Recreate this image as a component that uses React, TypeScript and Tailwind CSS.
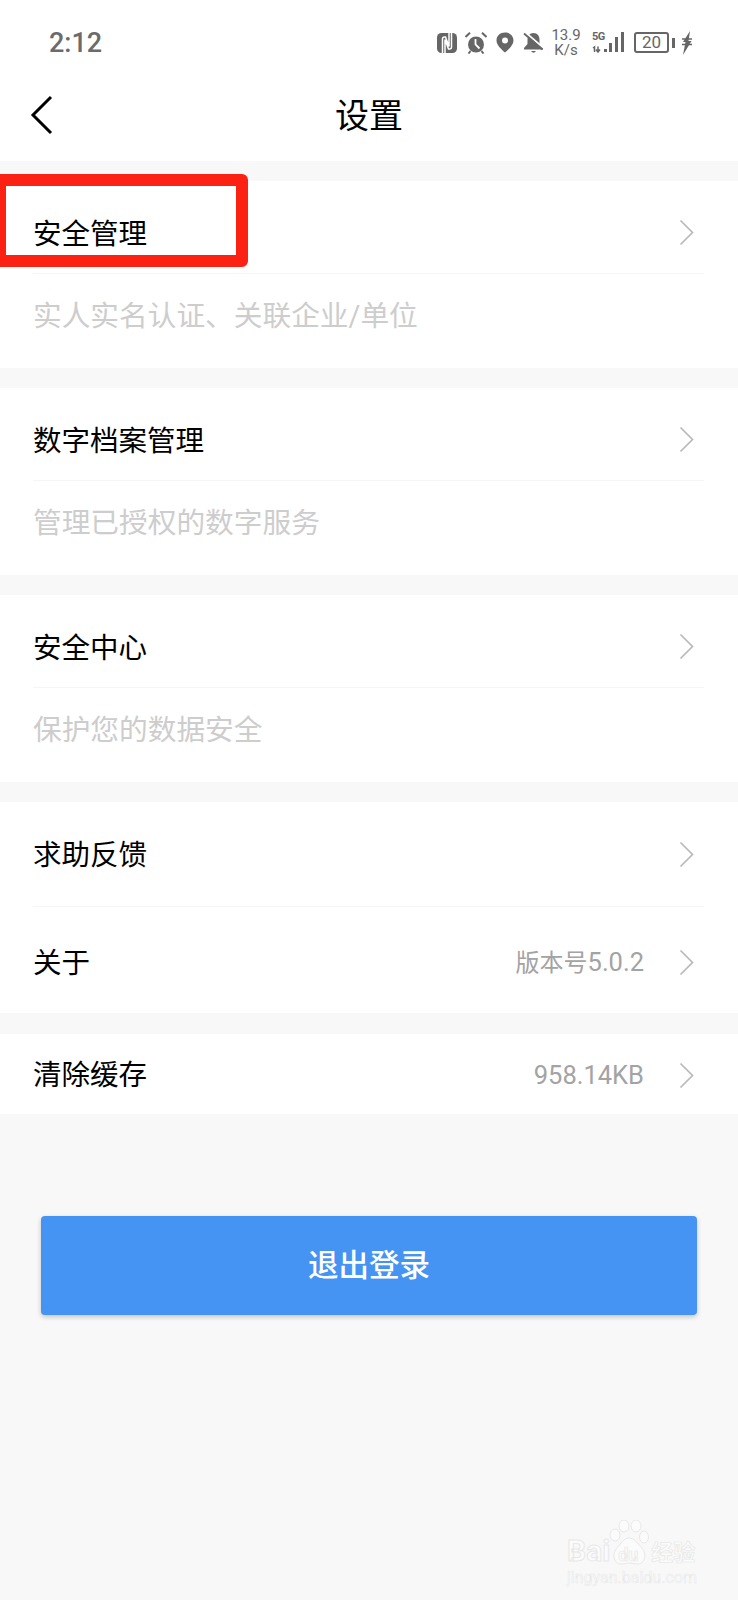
import type { ReactNode } from "react";

function Chevron() {
  return (
    <svg width="15" height="27" viewBox="0 0 15 27" fill="none" className="shrink-0">
      <path d="M1.5 1.5 L13.5 13.5 L1.5 25.5" stroke="#b9b9b9" strokeWidth="1.7" />
    </svg>
  );
}

function StatusIcons() {
  return (
    <div className="flex items-center text-[#666666]">
      {/* NFC */}
      <svg width="20" height="20" viewBox="0 0 20 20">
        <rect x="0" y="0" width="20" height="20" rx="4.5" fill="#666666" />
        <path d="M5.5 20 V6 Q5.5 4 7.5 4 H8.5 L12 13.5 V0 M14.5 0 V14 Q14.5 16 12.5 16 H11.5 L8 6.5 V20" fill="none" stroke="#ffffff" strokeWidth="1.5" />
      </svg>
      {/* Alarm */}
      <svg width="22" height="22" viewBox="0 0 22 22" className="ml-[8px]">
        <circle cx="11" cy="12.5" r="8" fill="#666666" />
        <path d="M10.5 7 V12.5 L14.5 16.5" stroke="#ffffff" strokeWidth="1.8" fill="none" />
        <path d="M0.5 5 L5 0.8 M21.5 5 L17 0.8 M3.5 21.5 L5.5 19 M18.5 21.5 L16.5 19" stroke="#666666" strokeWidth="2" />
      </svg>
      {/* Location */}
      <svg width="18" height="21" viewBox="0 0 18 21" className="ml-[9px]">
        <path fillRule="evenodd" d="M9 0.5 C4 0.5 0.5 4 0.5 8.5 C0.5 13 5 17 9 20.5 C13 17 17.5 13 17.5 8.5 C17.5 4 14 0.5 9 0.5 Z M9 5.5 A3 3 0 1 1 9 11.5 A3 3 0 1 1 9 5.5 Z" fill="#666666" />
      </svg>
      {/* Muted bell */}
      <svg width="21" height="22" viewBox="0 0 21 22" className="ml-[9px]">
        <path d="M10.5 1 C6.5 1 4.5 4 4.5 8 V12 L1 16 V17.5 H20 V16 L16.5 12 V8 C16.5 4 14.5 1 10.5 1 Z" fill="#666666" />
        <path d="M8 19 Q10.5 22.5 13 19 Z" fill="#666666" />
        <path d="M2 0 L20 15.5" stroke="#ffffff" strokeWidth="1.8" />
        <path d="M1 1.5 L19.5 17.5" stroke="#666666" strokeWidth="1.8" />
      </svg>
      {/* Net speed */}
      <div className="ml-[7px] flex w-[30px] flex-col items-center text-[15px] leading-[15px]">
        <span>13.9</span>
        <span>K/s</span>
      </div>
      {/* 5G + signal */}
      <div className="relative ml-[11px] h-[22px] w-[33px]">
        <span className="absolute top-[-1px] left-0 text-[11px] leading-[11px] font-bold tracking-[-0.5px]">5G</span>
        <svg width="33" height="22" viewBox="0 0 33 22" className="absolute top-0 left-0">
          <path d="M1 16 L2.5 15 V20 M6 14.5 V20 M4 17.5 L6 20 L8 17.5" stroke="#666666" strokeWidth="1.5" fill="none" />
          <rect x="12" y="17" width="3" height="3" fill="#666666" />
          <rect x="17" y="11" width="3" height="9" fill="#666666" />
          <rect x="23" y="5" width="3" height="15" fill="#666666" />
          <rect x="29" y="0" width="3" height="20" fill="#666666" />
        </svg>
      </div>
      {/* Battery */}
      <div className="ml-[9px] flex h-[21px] w-[35px] items-center justify-center rounded-[3px] border-2 border-[#666666] text-[17px] leading-none">
        20
      </div>
      <div className="ml-[3px] h-[10px] w-[3px] bg-[#666666]" />
      {/* Bolt */}
      <svg width="10" height="24" viewBox="0 0 10 24" className="ml-[7px]">
        <path d="M8 0 L1 11 H3.5 L1 24 L9.5 10 H6.5 Z" fill="#666666" />
        <path d="M0 8 H10 M0 13.5 H10" stroke="#666666" strokeWidth="1.4" />
      </svg>
    </div>
  );
}

function DetailCard({ title, desc }: { title: string; desc: string }) {
  return (
    <section className="bg-white pr-[34px] pl-[33px]">
      <div className="flex h-[93px] items-center justify-between border-b border-[#f5f5f5] pt-[10px] pr-[10px]">
        <span className="pt-[6px] text-[28.5px] text-black">{title}</span>
        <Chevron />
      </div>
      <div className="flex h-[94px] items-center pb-[8px] text-[28.7px] text-[#cdcdcd]">{desc}</div>
    </section>
  );
}

function Row({ title, value, textPad }: { title: string; value?: ReactNode; textPad: string }) {
  return (
    <div className="flex h-full items-center justify-between pr-[10px]">
      <span className={`${textPad} text-[28.5px] text-black`}>{title}</span>
      <div className="flex items-center">
        {value && <span className="mr-[35px] text-[25.5px] text-[#a3a3a3]">{value}</span>}
        <Chevron />
      </div>
    </div>
  );
}

export default function App() {
  return (
    <main className="relative h-[1600px] w-[738px] overflow-hidden bg-[#f8f8f8] font-['Roboto','Noto_Sans_CJK_SC',sans-serif]">
      {/* Status bar + title */}
      <header className="h-[161px] bg-white">
        <div className="flex h-[84px] items-center justify-between pt-[1px] pr-[46px] pl-[49px]">
          <span className="pt-[2px] text-[27px] font-medium text-[#6b6b6b]">2:12</span>
          <StatusIcons />
        </div>
        <div className="relative flex h-[64px] items-center justify-center">
          <svg width="24" height="40" viewBox="0 0 24 40" fill="none" className="absolute top-[11px] left-[30px]">
            <path d="M21 2 L3 20 L21 38" stroke="#000000" strokeWidth="3" />
          </svg>
          <h1 className="text-[34px] text-black">设置</h1>
        </div>
      </header>

      <div className="flex flex-col gap-[20px] pt-[20px]">
        <DetailCard title="安全管理" desc="实人实名认证、关联企业/单位" />
        <DetailCard title="数字档案管理" desc="管理已授权的数字服务" />
        <DetailCard title="安全中心" desc="保护您的数据安全" />
        <section className="mb-[1px] bg-white pr-[34px] pl-[33px]">
          <div className="h-[105px] border-b border-[#f5f5f5]">
            <Row title="求助反馈" textPad="pt-[4px]" />
          </div>
          <div className="h-[106px] pt-[4px]">
            <Row
              title="关于"
              textPad="pt-[4px]"
              value={
                <>
                  <span className="text-[24px]">版本号</span>5.0.2
                </>
              }
            />
          </div>
        </section>
        <section className="h-[80px] bg-white pt-[2px] pr-[34px] pl-[33px]">
          <Row title="清除缓存" textPad="pt-[3px]" value="958.14KB" />
        </section>
      </div>

      <div className="mt-[102px] px-[41px]">
        <button className="flex h-[99px] w-full items-center justify-center rounded-[4px] bg-[#4594f3] text-[30.5px] font-medium text-white shadow-[0_2px_5px_rgba(0,0,0,0.22)]">
          退出登录
        </button>
      </div>

      {/* Red annotation box */}
      <div className="absolute top-[174px] left-[-6px] h-[93px] w-[254px] rounded-[6px] border-[12px] border-[#fb2113]" />

      {/* Watermark */}
      <div className="absolute top-[1536px] left-[567px] w-[132px] text-[#fbfbfb]">
        <div className="flex items-end">
          <span className="text-[30px] leading-[30px] font-bold [-webkit-text-stroke:1px_#e8e8e8]">Bai</span>
          <div className="relative ml-[1px] h-[30px] w-[36px]">
            <svg width="40" height="46" viewBox="0 0 40 46" className="absolute bottom-0 left-[-2px]">
              <g fill="#fbfbfb" stroke="#e8e8e8" strokeWidth="1">
                <ellipse cx="6" cy="15" rx="5" ry="6" />
                <ellipse cx="15" cy="6" rx="5" ry="6" />
                <ellipse cx="27" cy="6" rx="5" ry="6" />
                <ellipse cx="35" cy="17" rx="4.5" ry="6" />
                <path d="M20 18 C14 18 12 24 8 28 C3 33 4 44 12 44 C16 44 18 43 20 43 C23 43 25 44 29 44 C36 44 38 34 33 28 C29 24 26 18 20 18 Z" />
              </g>
            </svg>
            <span className="absolute bottom-[2px] left-[7px] text-[18px] leading-[18px] font-bold text-[#fbfbfb] [-webkit-text-stroke:0.7px_#e8e8e8]">du</span>
          </div>
          <span className="ml-[4px] text-[22px] leading-[26px] font-bold [-webkit-text-stroke:0.7px_#e8e8e8]">经验</span>
        </div>
        <div className="mt-[2px] text-[16px] leading-[20px] whitespace-nowrap [-webkit-text-stroke:0.5px_#e8e8e8]">jingyan.baidu.com</div>
      </div>
    </main>
  );
}
